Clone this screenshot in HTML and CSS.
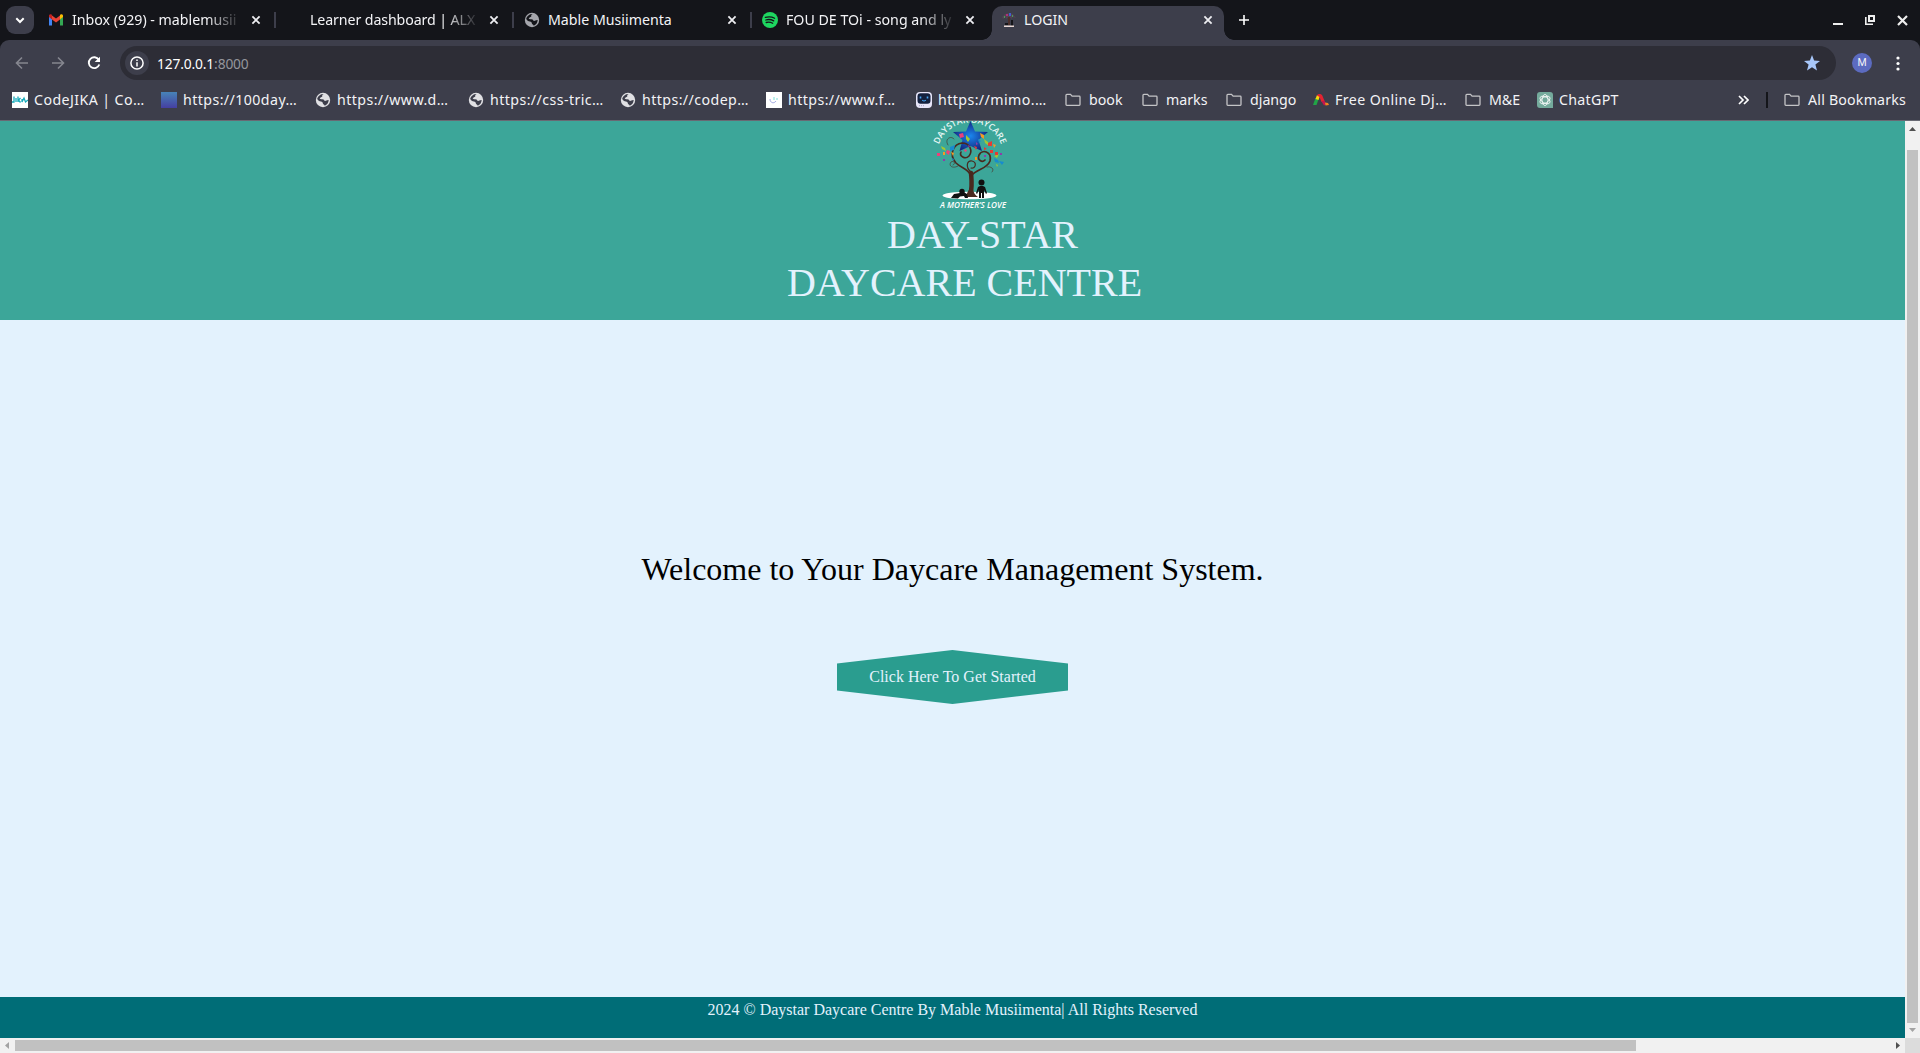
FILE: index.html
```html
<!DOCTYPE html>
<html lang="en">
<head>
<meta charset="utf-8">
<title>LOGIN</title>
<link rel="stylesheet" href="styles.css">
</head>
<body>
<svg class="defs" width="0" height="0" aria-hidden="true">
  <symbol id="x" viewBox="0 0 10 10"><path d="M1.400 1.400l7.200 7.200M8.600 1.400L1.400 8.600" fill="none" stroke="#eeeef2" stroke-width="1.800"/></symbol>
  <symbol id="globe" viewBox="0 0 16 16"><circle cx="8" cy="8" r="7.200" fill="currentColor"/><path d="M9 2c-1.500.2-2 1.200-1.700 2.400-1 .8-2.400.9-2.600 2.100.8.900 2.500.6 3.700 1 .8.400.8 1.300 1.600 1.400 1.100.1 1.600-.9 3.700-.8C13.400 11 12 13 9.800 13.700 9.500 12.500 8 12.500 7.700 11c-.1-.8-.8-1.200-1.700-1.400C4.300 9.300 2.800 8.200 2.200 7 2.800 4 5.500 1.900 9 2z" fill="var(--hole)"/><path d="M9.300 4.500c1.100-.1 1.600.5 2.600.8.300.7-.6 1.500-1.500 1.300-.8-.3-1.500-1-1.100-2.100z" fill="currentColor"/></symbol>
  <symbol id="folder" viewBox="0 0 16 14"><path d="M1 2.200a.8.800 0 0 1 .8-.8h3.700l1.600 1.800h7.100a.8.800 0 0 1 .8.800v7.600a.8.800 0 0 1-.8.800H1.800a.8.800 0 0 1-.8-.8z" fill="none" stroke="#c4c4c6" stroke-width="1.300"/></symbol>
</svg>

<header class="tabstrip">
  <button class="tab-search"><svg width="10" height="7" viewBox="0 0 10 7"><path d="M1.300 1.300L5 5l3.700-3.700" fill="none" stroke="#fff" stroke-width="2"/></svg></button>
  <div class="tabs">
    <div class="tab">
      <svg class="fav" viewBox="0 0 16 16"><path d="M1 4.500v9h3V7z" fill="#4285f4"/><path d="M15 4.500v9h-3V7z" fill="#34a853"/><path d="M4 3.500l4 3 4-3v4L8 10.500l-4-3z" fill="#ea4335"/><path d="M1 5V3.800c0-1.500 1.800-2 3-1v4.700z" fill="#c5221f"/><path d="M15 5V3.800c0-1.500-1.800-2-3-1v4.700z" fill="#fbbc04"/></svg>
      <span class="title fade">Inbox (929) - mablemusii</span><svg class="close"><use href="#x"/></svg>
    </div>
    <div class="tab"><span class="fav"></span><span class="title fade tight">Learner dashboard | ALX</span><svg class="close"><use href="#x"/></svg></div>
    <div class="tab"><svg class="fav gray"><use href="#globe"/></svg><span class="title">Mable Musiimenta</span><svg class="close"><use href="#x"/></svg></div>
    <div class="tab">
      <svg class="fav" viewBox="0 0 16 16"><circle cx="8" cy="8" r="8" fill="#1ed760"/><path d="M3.300 5.400c3-.9 6.700-.6 9.300.8M3.800 8c2.600-.8 5.700-.4 7.900.9M4.200 10.500c2.300-.6 4.500-.3 6.500.8" fill="none" stroke="#14151a" stroke-width="1.300" stroke-linecap="round"/></svg>
      <span class="title fade">FOU DE TOi - song and ly</span><svg class="close"><use href="#x"/></svg>
    </div>
    <div class="tab active">
      <svg class="fav" viewBox="0 0 16 16"><path d="M1 5l3-3 4-1 4 1 3 4-4-1v2L8 5 5 7V5L2 7z" fill="#514452"/><path d="M5 2h2v2H5z" fill="#b02f77"/><path d="M8 1h2v3H8z" fill="#425ed0"/><path d="M11 3h1v2h-1zM3 4h1v2H3z" fill="#4b9a5b"/><path d="M7 5h2v8H7z" fill="#4c302c"/><path d="M10 8h2v6h-2zM4 11h3v2H4z" fill="#151519"/><path d="M3 13.500h10V15H3z" fill="#e9d8d5"/></svg>
      <span class="title">LOGIN</span><svg class="close"><use href="#x"/></svg>
    </div>
  </div>
  <svg class="newtab" viewBox="0 0 10 10"><path d="M5 0v10M0 5h10" stroke="#fff" stroke-width="1.600"/></svg>
  <div class="window-controls">
    <svg width="10" height="10" viewBox="0 0 10 10"><path d="M0 8h10v2H0z" fill="#eee"/></svg>
    <svg width="10" height="10" viewBox="0 0 10 10"><path d="M4 1h5v5H4z" fill="none" stroke="#eee" stroke-width="2"/><path d="M.8 2v7.200H8" fill="none" stroke="#eee" stroke-width="1.600"/></svg>
    <svg width="11" height="11" viewBox="0 0 11 11"><path d="M1 1l9 9M10 1l-9 9" stroke="#eee" stroke-width="2.200"/></svg>
  </div>
</header>

<section class="toolbar">
  <nav class="navbar">
    <svg class="nav" viewBox="0 0 16 16"><path d="M14 8H3M8 2.500L2.500 8 8 13.500" fill="none" stroke="#85868f" stroke-width="1.600"/></svg>
    <svg class="nav" viewBox="0 0 16 16"><path d="M2 8h11M8 2.500L13.500 8 8 13.500" fill="none" stroke="#85868f" stroke-width="1.600"/></svg>
    <svg class="nav" viewBox="0 0 16 16"><path d="M12.800 4.800A5.400 5.400 0 1 0 13.300 9.500" fill="none" stroke="#fff" stroke-width="1.900"/><path d="M14 1.700v5.300H8.700z" fill="#fff"/></svg>
    <div class="omnibox">
      <span class="info"><svg width="14" height="14" viewBox="0 0 14 14"><circle cx="7" cy="7" r="6.100" fill="none" stroke="#fff" stroke-width="1.500"/><path d="M7 6.200v4.200M7 3.400v1.500" stroke="#fff" stroke-width="1.500"/></svg></span>
      <span class="url">127.0.0.1<span class="port">:8000</span></span>
      <svg class="star" viewBox="0 0 16 16"><path d="M8 0l2.100 5.500L16 5.900l-4.600 3.700L13 15.500 8 12.200l-5 3.300 1.600-5.900L0 5.900l5.900-.4z" fill="#a8c7fa"/></svg>
    </div>
    <span class="avatar">M</span>
    <svg class="kebab" width="4" height="15" viewBox="0 0 4 15"><g fill="#fff"><circle cx="2" cy="2" r="1.600"/><circle cx="2" cy="7.500" r="1.600"/><circle cx="2" cy="13" r="1.600"/></g></svg>
  </nav>
  <div class="bookmarks">
    <div class="bm"><svg class="ic" viewBox="0 0 16 16"><path d="M0 0h16v16H0z" fill="#fff"/><path d="M2 4.500v5.500H0M4 6v4M6 4.500v5.500M8.500 6L6.500 8l2 2.500M10 7v3l2-4 1.500 4 2.500-2" fill="none" stroke="#15aabb" stroke-width="1.300"/></svg><span>CodeJIKA | Co…</span></div>
    <div class="bm"><span class="ic blue"></span><span>https://100day…</span></div>
    <div class="bm"><svg class="ic"><use href="#globe"/></svg><span>https://www.d…</span></div>
    <div class="bm"><svg class="ic"><use href="#globe"/></svg><span>https://css-tric…</span></div>
    <div class="bm"><svg class="ic"><use href="#globe"/></svg><span>https://codep…</span></div>
    <div class="bm"><svg class="ic" viewBox="0 0 16 16"><path d="M0 0h16v16H0z" fill="#fff"/><path d="M4 7c0 4 4 5 6 2" fill="none" stroke="#9fa6e2"/><path d="M8 5v3M11 6v2" stroke="#7ce0d8"/></svg><span>https://www.f…</span></div>
    <div class="bm"><svg class="ic" viewBox="0 0 16 16"><rect width="16" height="16" rx="4" fill="#e8e6fa"/><rect x="1.500" y="1.300" width="13" height="10.400" rx="3" fill="#14213f"/><path d="M4.500 4.500v2M11.500 4.500v2" stroke="#46a8f8" stroke-width="1.600"/><path d="M6 8c1 1.300 3 1.300 4 0" stroke="#46a8f8" fill="none"/><path d="M3 13.700h5" stroke="#a8a3c8" stroke-dasharray="1 1"/></svg><span>https://mimo.…</span></div>
    <div class="bm dir"><svg class="ic"><use href="#folder"/></svg><span>book</span></div>
    <div class="bm dir"><svg class="ic"><use href="#folder"/></svg><span>marks</span></div>
    <div class="bm dir"><svg class="ic"><use href="#folder"/></svg><span>django</span></div>
    <div class="bm"><svg class="ic" viewBox="0 0 16 16"><path d="M0 13L2.500 6l3 1.500L3.500 13z" fill="#22a447"/><path d="M2.500 7l1.500-4 3 1-1.500 4z" fill="#f6d60c"/><path d="M4 3.500c1-2 4.500-2 5.500.5l2 5-3 1L6.500 5z" fill="#e32331"/><path d="M8.500 9.500l3-1 1.500 4-2 1z" fill="#c4154e"/><path d="M12 10.500l3 .5 1 2-3.500.5z" fill="#f58220"/></svg><span>Free Online Dj…</span></div>
    <div class="bm dir"><svg class="ic"><use href="#folder"/></svg><span>M&amp;E</span></div>
    <div class="bm chat"><svg class="ic" viewBox="0 0 16 16"><path d="M3 0h10a3 3 0 0 1 3 3v13H3a3 3 0 0 1-3-3V3a3 3 0 0 1 3-3z" fill="#74aa9c"/><g fill="none" stroke="#fff" stroke-width=".8"><ellipse cx="8" cy="8" rx="3" ry="5.500"/><ellipse cx="8" cy="8" rx="3" ry="5.500" transform="rotate(60 8 8)"/><ellipse cx="8" cy="8" rx="3" ry="5.500" transform="rotate(120 8 8)"/></g></svg><span>ChatGPT</span></div>
    <svg class="more" width="11" height="10" viewBox="0 0 11 10"><path d="M1 1l4 4-4 4M6 1l4 4-4 4" fill="none" stroke="#fff" stroke-width="1.700"/></svg>
    <i class="sep"></i>
    <div class="bm dir all"><svg class="ic"><use href="#folder"/></svg><span>All Bookmarks</span></div>
  </div>
</section>

<div class="viewport">
  <div class="page">
    <div class="banner">
      <svg class="logo" width="80" height="92" viewBox="0 0 80 92">
        <defs><path id="arch" d="M8 26.500A33 33 0 0 1 72 26.500"/><radialGradient id="sg"><stop offset="0" stop-color="#1a86ee"/><stop offset="1" stop-color="#132a83"/></radialGradient></defs>
        <text class="arch"><textPath href="#arch" startOffset="50%" text-anchor="middle">DAYSTAR DAYCARE</textPath></text>
        <path d="M40.500 0l4.500 10.500 13 .5-9.500 8 3.500 11-11.500-5-11 5 3-11-9.500-8 13-.5z" fill="url(#sg)"/>
        <g fill="none" stroke="#49291f" stroke-linecap="round">
          <path d="M40.500 73c2-9 1-14 .5-21" stroke-width="4.500"/>
          <path d="M41 55c-2-7-10-8-15-13-8-9-2-19 6-20 8 0 11 8 7 13-4 4-10 0-8-4" stroke-width="1.600"/>
          <path d="M42 54c5-6 15-6 18-14 2-10-8-12-11-6-2 5 3 8 6 5" stroke-width="1.700"/>
          <path d="M41 51c-6-5-4-12 1-11 5 1 4 8-1 7" stroke-width="1.200"/>
          <path d="M28 45c-5 3-10 0-7-4 3-2 5 2 2 3M57 46c4-1 8 2 5 5M18 24c-4-6 3-10 6-6" stroke-width=".6"/>
        </g>
        <ellipse cx="39.500" cy="74.500" rx="27" ry="3.800" fill="#fff"/>
        <path d="M34 76c3-1 3-5 5-7h4c1 3 2 5 5 7z" fill="#49291f"/>
        <g fill="#111"><circle cx="51.500" cy="61.500" r="3"/><path d="M48 66c1-1.500 6-1.500 7 0l2 6-1 1-2-4v8h-2v-5h-1v5h-2v-8l-2 4-1-1zM21 77l3-4 6-1 2-2 5 3 1 4h-3l-1-2-4 .5-2 2z"/><circle cx="32" cy="70.500" r="2.700"/></g>
        <g fill="#ec407a"><path d="M29 13l4-1 1 4-4 1zM17 29l3 1-1 4-3-2zM35 28l2 1-1 2-2-1zM7 32h3v3H7z"/></g>
        <g fill="#f59a23"><path d="M50 12l4 2v4l-3-2zM21 31l3 1-1 3zM63 23l3 1-2 3zM45 36h2v3h-2zM13 31h2v3h-2z"/></g>
        <g fill="#a1c735"><path d="M11 25l4 2 1 3-4-2zM36 14l4 4-2 3-2-3zM54 18l4 3 1 4-4-3zM64 35l5-2-2 4zM66 43l2 1-1 2z"/></g>
        <g fill="#e53935"><path d="M58 22l4-2v5h-4zM44 25l3 1-1 3zM60 29h3v3h-3zM65 31h3v3h-3zM54 26l3 2-3 1z"/></g>
        <g fill="#168bd0"><path d="M20 26l5-2-1 5-4 1zM69 40l5 1-2 3zM64 37l4 2 1 3-4-1zM48 18l3 2-2 2zM22 37l2 1-1 2z"/></g>
        <g fill="#8e3aaa"><path d="M13 38h2v2h-2zM46 21l2 2-2 1zM38 24l2 1-1 2zM70 32h2v2h-2zM54 34h2v2h-2z"/></g>
        <text class="motto" x="10" y="87" textLength="66" lengthAdjust="spacingAndGlyphs">A MOTHER’S LOVE</text>
      </svg>
      <h1><span class="line first">DAY-STAR</span><span class="line">DAYCARE CENTRE</span></h1>
    </div>
    <main class="main">
      <h2>Welcome to Your Daycare Management System.</h2>
      <a class="cta">Click Here To Get Started</a>
    </main>
    <footer class="foot">2024 © Daystar Daycare Centre By Mable Musiimenta| All Rights Reserved</footer>
  </div>
  <div class="vbar"><i class="arrow up"></i><i class="thumb"></i><i class="arrow down"></i></div>
  <div class="hbar"><i class="arrow left"></i><i class="thumb"></i><i class="arrow right"></i></div>
  <div class="corner"></div>
</div>
</body>
</html>
```
FILE: styles.css
```css
* { box-sizing: border-box; }
body {
  margin: 0;
  width: 1920px;
  height: 1053px;
  overflow: hidden;
  background: #14151a;
  font-family: "Noto Sans", "Open Sans", sans-serif;
  color: #f3f3f6;
}
.defs { position: absolute; }
svg { display: block; flex: none; }

/* tab strip */
.tabstrip { height: 40px; display: flex; align-items: flex-start; padding-left: 6px; }
.tab-search { width: 28px; height: 28px; margin: 6px 4px 0 0; padding: 0; border: 0; border-radius: 9px; background: #3d3e4b; display: grid; place-items: center; }
.tabs { display: grid; grid-template-columns: repeat(5, 238px); }
.tab { height: 40px; display: flex; align-items: center; padding: 0 0 1px 10px; background: linear-gradient(#3d3e4b, #3d3e4b) 236px 12px / 2px 16px no-repeat; }
.tab:nth-child(4) { background: none; }
.fav { width: 16px; height: 16px; flex: none; margin-right: 8px; --hole: #14151a; }
.gray { color: #a5a6ac; }
.title { width: 170px; height: 24px; line-height: 23px; font-size: 14.200px; white-space: nowrap; margin-right: 9px; }
.fade { -webkit-mask-image: linear-gradient(90deg, #000 134px, transparent 170px); mask-image: linear-gradient(90deg, #000 134px, transparent 170px); }
.tight { letter-spacing: -.1px; }
.close { width: 10px; height: 10px; }
.tab.active { position: relative; height: 34px; margin: 6px 4px 0 2px; padding: 0 0 6px 9px; border-radius: 10px 10px 0 0; background: #3d3e4b; }
.tab.active::before, .tab.active::after { content: ""; position: absolute; bottom: 0; width: 10px; height: 10px; }
.tab.active::before { left: -10px; background: radial-gradient(circle at 0 0, transparent 9.500px, #3d3e4b 10px); }
.tab.active::after { right: -10px; background: radial-gradient(circle at 100% 0, transparent 9.500px, #3d3e4b 10px); }
.tab.active .fav { margin-right: 7px; }
.newtab { width: 10px; height: 10px; margin: 15px 0 0 11px; }
.window-controls { margin: 15px 12px 0 auto; display: flex; gap: 22px; }

/* address row */
.toolbar { height: 81px; background: #3d3e4b; border-radius: 9px 9px 0 0; border-bottom: 1px solid #686973; }
.navbar { height: 40px; display: flex; align-items: center; padding: 6px 20px 0 14px; }
.nav { width: 16px; height: 16px; margin-right: 20px; }
.omnibox { width: 1716px; height: 34px; margin-left: -2px; border-radius: 17px; background: #2d2d36; display: flex; align-items: center; padding: 0 16px 0 5px; }
.info { width: 24px; height: 24px; border-radius: 50%; background: #3d3e4b; display: grid; place-items: center; }
.url { margin-left: 8px; font-size: 13.800px; letter-spacing: -.15px; color: #fff; }
.port { color: #94959c; }
.star { width: 16px; height: 16px; margin-left: auto; }
.avatar { width: 20px; height: 20px; margin-left: 16px; border-radius: 50%; background: #5c6bc0; font: 10.500px/20px Roboto, sans-serif; text-align: center; }
.kebab { margin-left: 24px; }

/* bookmarks row */
.bookmarks { height: 39px; display: grid; align-items: center; padding-left: 12px; grid-template-columns: 149px 154px 153px 152px 146px 150px 149px 77px 84px 87px 152px 72px 201px 28px 18px 130px; }
.bm { display: flex; align-items: center; gap: 6px; font-size: 14.200px; letter-spacing: .42px; white-space: nowrap; }
.dir { gap: 8px; letter-spacing: 0; }
.chat { letter-spacing: .3px; }
.all { letter-spacing: .2px; }
.ic { width: 16px; height: 16px; flex: none; color: #e0e0e3; --hole: #3d3e4b; }
.blue { background: linear-gradient(#4783b8, #453fa1); }
.sep { width: 2px; height: 16px; background: #14151a; }

/* document and its scrollbars */
.viewport { height: 932px; display: grid; grid-template: 917px 15px / 1905px 15px; font-family: "Liberation Serif", "Times New Roman", serif; }
.page { display: grid; grid-template-rows: 199px 677px 41px; background: #e3f2fd; }
.banner { background: #3ca699; color: #e3f2fd; overflow: hidden; display: flex; flex-direction: column; align-items: center; }
.logo { margin-left: 35px; overflow: visible; }
.arch { font: 600 8.800px "Open Sans", sans-serif; fill: #e9f8f6; }
.motto { font: italic 600 8px "Open Sans", sans-serif; fill: #fff; }
h1 { margin: -2px 0 0; font-size: 40px; font-weight: 400; line-height: 48px; text-align: center; }
.line { display: block; padding-left: 24px; }
.first { padding-left: 60px; }
.main { display: flex; flex-direction: column; align-items: center; }
h2 { margin: 230px 0 0; font-size: 32px; font-weight: 400; line-height: 38px; color: #000; }
.cta { width: 231px; height: 54px; margin-top: 62px; line-height: 54px; text-align: center; font-size: 16px; color: #e3f2fd; background: #2a9d8f; clip-path: polygon(50% 0, 100% 25%, 100% 75%, 50% 100%, 0 75%, 0 25%); }
.foot { background: #006d77; color: #e3f2fd; text-align: center; font-size: 16px; line-height: 26px; }
.vbar, .hbar { background: #f1f1f1; display: flex; align-items: center; }
.vbar { flex-direction: column; padding: 6px 0; }
.hbar { padding: 0 5px; }
.thumb { background: #c1c1c1; }
.vbar .thumb { width: 11px; height: 873px; margin-top: 19px; }
.hbar .thumb { width: 1621px; height: 11px; margin-left: 6px; }
.arrow { background: #505050; }
.up { width: 7px; height: 4px; clip-path: polygon(50% 0, 100% 100%, 0 100%); }
.down { width: 7px; height: 4px; margin-top: 5px; background: #a3a3a3; clip-path: polygon(0 0, 100% 0, 50% 100%); }
.left { width: 4px; height: 7px; background: #a3a3a3; clip-path: polygon(0 50%, 100% 0, 100% 100%); }
.right { width: 4px; height: 7px; margin-left: auto; clip-path: polygon(0 0, 100% 50%, 0 100%); }
.corner { background: #dcdcdc; }
```
